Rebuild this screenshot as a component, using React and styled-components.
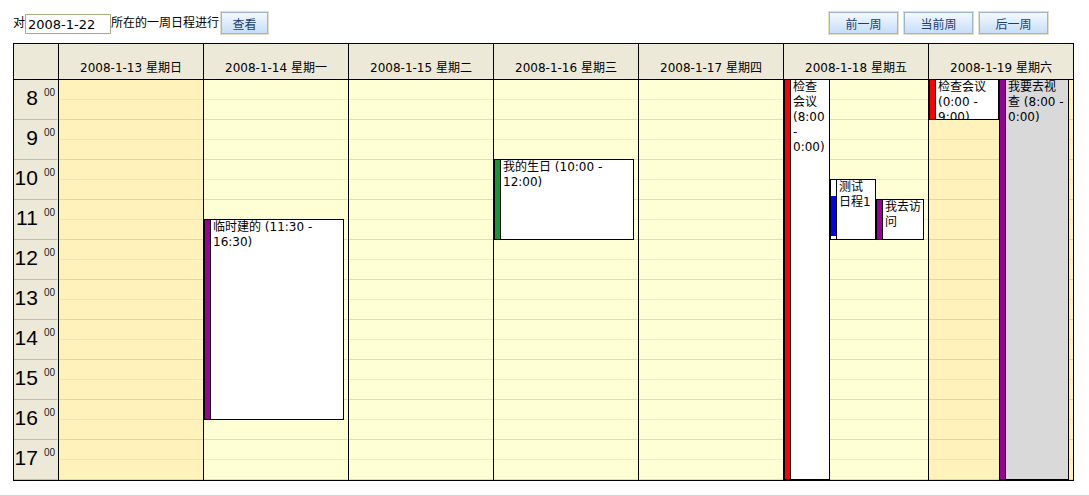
import React from 'react';
import styled, { createGlobalStyle } from 'styled-components';

const GlobalStyle = createGlobalStyle`
  html, body {
    margin: 0;
    padding: 0;
    background: #fff;
  }
  body {
    font-family: 'DejaVu Sans', 'Noto Sans CJK SC', sans-serif;
    font-size: 12px;
    color: #000;
  }
`;

const HOUR_H = 40;
const FIRST_HOUR = 8;
const HOURS = [8, 9, 10, 11, 12, 13, 14, 15, 16, 17];

const days = [
  { label: '2008-1-13 星期日', weekend: true },
  { label: '2008-1-14 星期一' },
  { label: '2008-1-15 星期二' },
  { label: '2008-1-16 星期三' },
  { label: '2008-1-17 星期四' },
  { label: '2008-1-18 星期五' },
  { label: '2008-1-19 星期六', weekend: true },
];

// start/end in hours, left/width in px inside the day column
const events = {
  1: [{ title: '临时建的 (11:30 - 16:30)', start: 11.5, end: 16.5, left: 0, width: 140, color: '#990099' }],
  3: [{ title: '我的生日 (10:00 - 12:00)', start: 10, end: 12, left: 0, width: 140, color: '#119933' }],
  5: [
    { title: '检查会议 (8:00 - 0:00)', start: 8, end: 18, left: 0, width: 46, color: '#ff0000' },
    { title: '测试日程1', start: 10.5, end: 12, left: 46, width: 46, color: '#0000ff', partial: true },
    { title: '我去访问', start: 11, end: 12, left: 92, width: 48, color: '#990099' },
  ],
  6: [
    { title: '检查会议 (0:00 - 9:00)', start: 8, end: 9, left: 0, width: 70, color: '#ff0000' },
    { title: '我要去视查 (8:00 - 0:00)', start: 8, end: 18, left: 70, width: 70, color: '#990099', bg: '#d9d9d9' },
  ],
};

const Page = styled.div`
  padding: 12px 0 0 13px;
`;

const Toolbar = styled.div`
  width: 1035px;
  height: 22px;
  display: flex;
  align-items: center;
  justify-content: space-between;
`;

const Group = styled.div`
  display: flex;
  align-items: center;
  gap: ${p => p.$gap || 0}px;
`;

const Label = styled.span`
  font-size: 12px;
  line-height: 22px;
`;

const DateInput = styled.input`
  box-sizing: border-box;
  width: 86px;
  height: 20px;
  margin: 2px 0 0;
  padding: 0 2px;
  border: 1px solid #a5ad7e;
  font-family: 'DejaVu Sans', sans-serif;
  font-size: 13px;
  color: #000;
  outline: none;
`;

const Button = styled.button`
  box-sizing: border-box;
  width: ${p => p.$w}px;
  height: 22px;
  margin-left: ${p => p.$ml || 0}px;
  padding: 0;
  border: 1px solid #9db6cf;
  box-shadow: 0 0 0 1px #e4ddc8;
  background: linear-gradient(#f4f9ff, #c6def7);
  color: #1b3d72;
  font-family: 'DejaVu Sans', 'Noto Sans CJK SC', sans-serif;
  font-size: 12px;
  cursor: pointer;
`;

const Calendar = styled.div`
  margin-top: 9px;
  width: max-content;
  display: grid;
  grid-template-columns: 45px repeat(7, 145px);
  grid-template-rows: 36px ${HOURS.length * HOUR_H}px;
  border: 1px solid #000;
  border-right: none;
`;

const HeadCell = styled.div`
  box-sizing: border-box;
  background: #ece9d8;
  border-right: 1px solid #000;
  border-bottom: 1px solid #000;
  display: flex;
  align-items: flex-end;
  justify-content: center;
  padding-bottom: 4px;
  font-size: 12px;
  line-height: 14px;
  white-space: nowrap;
`;

const TimeCol = styled.div`
  box-sizing: border-box;
  background: #ece9d8;
  border-right: 1px solid #000;
  display: flex;
  flex-direction: column;
`;

const TimeSlot = styled.div`
  box-sizing: border-box;
  height: ${HOUR_H}px;
  border-bottom: 1px solid ${p => (p.$last ? '#c3bfae' : '#c3bfae')};
  display: flex;
  justify-content: flex-end;
  align-items: flex-start;
  padding: 6px 3px 0 0;
  font-family: 'Liberation Sans', sans-serif;
`;

const Hour = styled.span`
  font-size: 21px;
  line-height: 24px;
`;

const Minute = styled.span`
  font-size: 10px;
  line-height: 10px;
  margin: 2px 0 0 6px;
  color: #222;
`;

const DayCol = styled.div`
  position: relative;
  box-sizing: border-box;
  border-right: 1px solid #000;
  background-color: ${p => (p.$weekend ? '#fff3bb' : '#ffffd5')};
  background-image: repeating-linear-gradient(
    to bottom,
    transparent 0 19px,
    ${p => (p.$weekend ? '#f4e4ad' : '#f1ebc2')} 19px 20px,
    transparent 20px 39px,
    ${p => (p.$weekend ? '#e6d39d' : '#e6dcaa')} 39px 40px
  );
`;

const Event = styled.div`
  position: absolute;
  box-sizing: border-box;
  display: flex;
  border: 1px solid #000;
  background: ${p => p.$bg || '#fff'};
  overflow: hidden;
`;

const Bar = styled.div`
  flex: none;
  width: 5px;
  border-right: 1px solid #000;
  background: ${p =>
    p.$partial
      ? `linear-gradient(to bottom, #fff 0 16px, ${p.$color} 16px calc(100% - 3px), #fff calc(100% - 3px))`
      : p.$color};
`;

const EventText = styled.div`
  flex: 1;
  min-width: 0;
  padding: 0 2px;
  font-size: 12px;
  line-height: 15px;
`;

const Footer = styled.div`
  margin-top: 14px;
  border-top: 1px solid #cfd6dd;
  height: 4px;
`;

export default function App() {
  return (
    <>
      <GlobalStyle />
      <Page>
        <Toolbar>
          <Group>
            <Label>对</Label>
            <DateInput defaultValue="2008-1-22" />
            <Label>所在的一周日程进行</Label>
            <Button $w={47} $ml={2}>查看</Button>
          </Group>
          <Group $gap={6}>
            <Button $w={69}>前一周</Button>
            <Button $w={69}>当前周</Button>
            <Button $w={69}>后一周</Button>
          </Group>
        </Toolbar>

        <Calendar>
          <HeadCell />
          {days.map(d => (
            <HeadCell key={d.label}>{d.label}</HeadCell>
          ))}

          <TimeCol>
            {HOURS.map((h, i) => (
              <TimeSlot key={h} $last={i === HOURS.length - 1}>
                <Hour>{h}</Hour>
                <Minute>00</Minute>
              </TimeSlot>
            ))}
          </TimeCol>
          {days.map((d, i) => (
            <DayCol key={d.label} $weekend={d.weekend}>
              {(events[i] || []).map(ev => {
                const top = (ev.start - FIRST_HOUR) * HOUR_H - 1;
                const bottom = Math.min(ev.end - FIRST_HOUR, HOURS.length) * HOUR_H;
                return (
                  <Event
                    key={ev.title}
                    $bg={ev.bg}
                    style={{ top, left: ev.left, width: ev.width, height: bottom - top }}
                  >
                    <Bar $color={ev.color} $partial={ev.partial} />
                    <EventText>{ev.title}</EventText>
                  </Event>
                );
              })}
            </DayCol>
          ))}
        </Calendar>
      </Page>
      <Footer />
    </>
  );
}
